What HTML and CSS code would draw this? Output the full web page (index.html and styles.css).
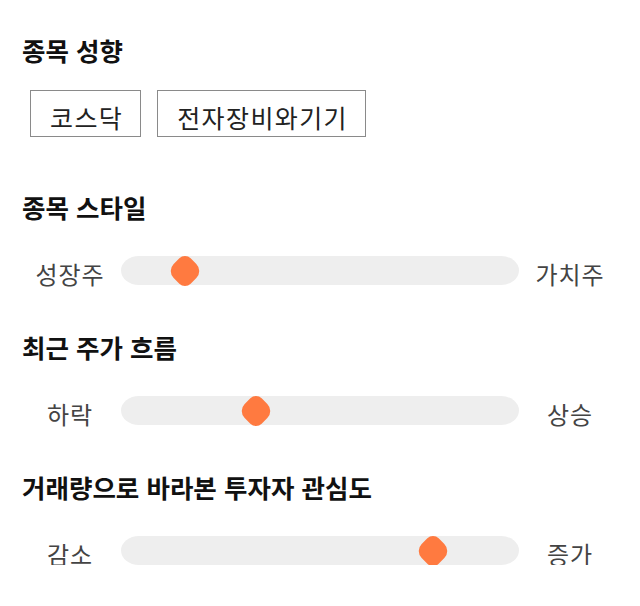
FILE: index.html
```html
<!DOCTYPE html>
<html lang="ko">
<head>
<meta charset="utf-8">
<link rel="stylesheet" href="styles.css">
</head>
<body>
<div class="page">
  <section class="group">
    <h2 class="title">종목 성향</h2>
    <div class="tags">
      <span class="tag">코스닥</span>
      <span class="tag">전자장비와기기</span>
    </div>
  </section>

  <section class="group">
    <h2 class="title">종목 스타일</h2>
    <div class="scale">
      <span class="scale-label">성장주</span>
      <div class="track"><span class="thumb" style="left: 16%"></span></div>
      <span class="scale-label">가치주</span>
    </div>
  </section>

  <section class="group">
    <h2 class="title">최근 주가 흐름</h2>
    <div class="scale">
      <span class="scale-label">하락</span>
      <div class="track"><span class="thumb" style="left: 34%"></span></div>
      <span class="scale-label">상승</span>
    </div>
  </section>

  <section class="group">
    <h2 class="title">거래량으로 바라본 투자자 관심도</h2>
    <div class="scale">
      <span class="scale-label">감소</span>
      <div class="track"><span class="thumb" style="left: 78.4%"></span></div>
      <span class="scale-label">증가</span>
    </div>
  </section>
</div>
</body>
</html>
```

FILE: styles.css
```css
* { box-sizing: border-box; }

html, body {
  margin: 0;
  padding: 0;
  background: #ffffff;
}

body {
  font-family: "Noto Sans CJK KR", "Noto Sans", sans-serif;
  color: #111;
}

.page {
  padding: 33px 20px 0 20px;
}

.group + .group {
  margin-top: 45px;
}

.group:nth-child(2) {
  margin-top: 53px;
}

.title {
  margin: 0;
  padding-left: 2px;
  font-size: 25.5px;
  font-weight: 700;
  line-height: 34px;
  color: #111;
}

.tags {
  display: flex;
  gap: 16px;
  margin-top: 23px;
  padding-left: 10px;
}

.tag {
  display: block;
  height: 47px;
  padding: 8px 17px 0 19px;
  border: 1px solid #8a8a8a;
  font-size: 25px;
  letter-spacing: 1.4px;
  line-height: 36px;
  color: #222;
}

.scale {
  display: grid;
  grid-template-columns: 100px 400px 100px;
  align-items: start;
  margin-top: 32px;
  height: 29px;
}

.scale-label {
  margin-top: 3px;
  text-align: center;
  font-size: 24px;
  letter-spacing: 1px;
  line-height: 30px;
  color: #444;
}

.track {
  position: relative;
  height: 29px;
  margin: 0 1px;
  background: #eeeeee;
  border-radius: 18px / 50%;
}

.thumb {
  position: absolute;
  top: 50%;
  width: 26px;
  height: 26px;
  margin-left: -13px;
  margin-top: -13px;
  background: #ff7a40;
  border-radius: 8px 10px 8px 10px;
  transform: rotate(45deg);
}
```
